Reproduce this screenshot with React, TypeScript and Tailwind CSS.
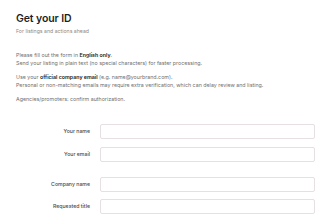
export default function App() {
  return (
    <div className="min-h-[220px] bg-white pl-4 pr-[7px] pt-[12px] font-['Inter',sans-serif] text-[#1f1f1f]">
      <h1 className="text-[10.5px] font-semibold leading-[14px] tracking-[-0.1px]">Get your ID</h1>
      <p className="mt-[2px] text-[5.2px] leading-[7px] text-[#8a8a8a]">For listings and actions ahead</p>

      <div className="mt-[16px] space-y-[6px] text-[5.3px] leading-[8px] text-[#707070]">
        <p>
          Please fill out the form in <span className="font-semibold text-[#222]">English only</span>.
          <br />
          Send your listing in plain text (no special characters) for faster processing.
        </p>
        <p>
          Use your <span className="font-semibold text-[#222]">official company email</span> (e.g. name@yourbrand.com).
          <br />
          Personal or non-matching emails may require extra verification, which can delay review and listing.
        </p>
        <p>Agencies/promoters: confirm authorization.</p>
      </div>

      <form className="mt-[21px]">
        <div className="space-y-[8px]">
          <Row label="Your name" />
          <Row label="Your email" />
        </div>
        <div className="mt-[15px] space-y-[7px]">
          <Row label="Company name" />
          <Row label="Requested title" />
        </div>
      </form>
    </div>
  );
}

function Row({ label }: { label: string }) {
  return (
    <div className="flex items-center gap-[10px]">
      <label className="w-[74px] shrink-0 text-right text-[5.2px] font-medium text-[#4a4a4a]">{label}</label>
      <input className="h-[15px] min-w-0 flex-1 rounded-[2px] border border-[#e6e0e0] bg-white outline-none" />
    </div>
  );
}
